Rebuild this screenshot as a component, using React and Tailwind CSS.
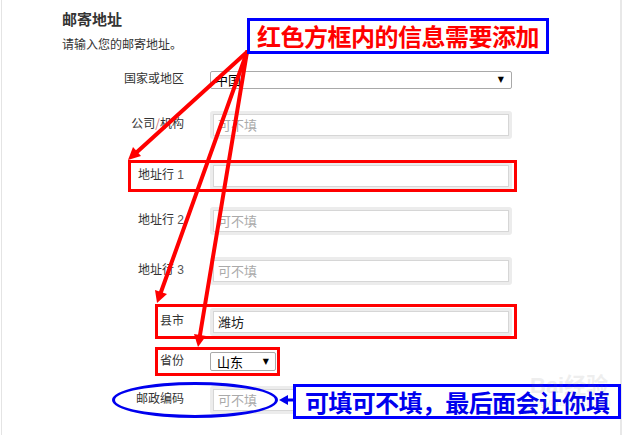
import React from 'react';

const cjk = { fontFamily: '"Noto Sans CJK SC", "Liberation Sans", sans-serif' };

// 标签 + 输入框的一行
const Row = ({ label, className, children }) => (
  <div className={`flex items-center ${className}`}>
    <div className="w-[122px] text-right text-[12px] leading-[18px] text-[#333] -mt-[4px] whitespace-pre">{label}</div>
    <div className="ml-[26px]">{children}</div>
  </div>
);

const TextBox = ({ value, placeholder }) => (
  <div className="w-[302px] h-[28px] rounded-[3px] bg-[#ececec] p-[3px]">
    <div className="w-[296px] h-[22px] bg-white border border-[#d6d6d6] flex items-center pl-[4px] text-[13px]">
      {value ? <span className="text-[#222]">{value}</span> : <span className="text-[#aaa]">{placeholder}</span>}
    </div>
  </div>
);

const Num = ({ n }) => <span className="text-[#555]" style={{ fontFamily: '"Liberation Sans", sans-serif' }}> {n}</span>;

export default function App() {
  return (
    <div className="relative w-[625px] h-[435px] bg-white overflow-hidden" style={cjk}>
      <div className="absolute left-[1px] top-0 h-full w-[1px] bg-[#e4e4e4]" />
      <div className="absolute left-[620px] top-0 h-full w-[2px] bg-[#e8e8e8]" />

      <div className="pl-[62px] pt-[9px]">
        <h2 className="text-[15px] leading-[20px] font-bold text-[#333]">邮寄地址</h2>
        <p className="mt-[6px] text-[12px] leading-[18px] text-[#333]">请输入您的邮寄地址。</p>

        <Row label="国家或地区" className="mt-[18px] h-[18px]">
          <div className="w-[302px] h-[18px] border border-[#a9a9a9] rounded-[2px] flex items-center justify-between pl-[4px] pr-[7px] text-[13px] text-black">
            <span>中国</span>
            <span className="text-[8px]" style={{ fontFamily: '"DejaVu Sans", sans-serif' }}>▼</span>
          </div>
        </Row>
        <Row label={<>公司<span className="text-[#c77]">/</span>机构</>} className="mt-[22px] h-[28px]">
          <TextBox placeholder="可不填" />
        </Row>
        <Row label={<>地址行<Num n="1" /></>} className="mt-[23px] h-[28px]">
          <TextBox />
        </Row>
        <Row label={<>地址行<Num n="2" /></>} className="mt-[17px] h-[28px]">
          <TextBox placeholder="可不填" />
        </Row>
        <Row label={<>地址行<Num n="3" /></>} className="mt-[22px] h-[28px]">
          <TextBox placeholder="可不填" />
        </Row>
        <Row label="县市" className="mt-[23px] h-[28px]">
          <TextBox value="潍坊" />
        </Row>
        <Row label="省份" className="mt-[16px] h-[19px]">
          <div className="w-[66px] h-[19px] border border-[#a9a9a9] rounded-[2px] flex items-center justify-between pl-[6px] pr-[6px] text-[13px] text-black">
            <span>山东</span>
            <span className="text-[8px]" style={{ fontFamily: '"DejaVu Sans", sans-serif' }}>▼</span>
          </div>
        </Row>
        <Row label="邮政编码" className="mt-[15px] h-[28px]">
          <TextBox placeholder="可不填" />
        </Row>
      </div>

      {/* 标注 */}
      <div className="absolute left-[128px] top-[160px] w-[389px] h-[32px] border-[3px] border-[#ff0000]" />
      <div className="absolute left-[155px] top-[304px] w-[362px] h-[35px] border-[3px] border-[#ff0000]" />
      <div className="absolute left-[155px] top-[347px] w-[125px] h-[29px] border-[3px] border-[#ff0000]" />
      <div className="absolute left-[112px] top-[382px] w-[166px] h-[36px] rounded-[50%] border-[3px] border-[#0000ee]" />

      <svg className="absolute left-0 top-0" width="625" height="435">
        <g stroke="#ff0000" strokeWidth="4" strokeLinecap="round">
          <line x1="247" y1="52" x2="137" y2="152" />
          <line x1="247" y1="52" x2="161" y2="292" />
          <line x1="247" y1="52" x2="200" y2="335" />
        </g>
        <g fill="#ff0000">
          <polygon points="128,160 141,156 133,147" />
          <polygon points="157,303 167,294 155,290" />
          <polygon points="198,347 206,336 194,334" />
        </g>
        <line x1="293" y1="400" x2="286" y2="400" stroke="#0000ee" strokeWidth="3" />
        <polygon points="279,400 288,395 288,405" fill="#0000ee" />
      </svg>

      <div className="absolute left-[247px] top-[18px] w-[302px] h-[36px] border-[3px] border-[#0000ff] bg-white flex items-center justify-center">
        <span className="text-[24px] leading-none font-bold text-[#ff0000] tracking-[-0.5px]">红色方框内的信息需要添加</span>
      </div>

      <div className="absolute left-[293px] top-[384px] w-[328px] h-[35px] border-[3px] border-[#0000ff] bg-white flex items-center justify-center">
        <span className="text-[24px] leading-none font-bold text-[#0000ee] tracking-[-0.6px]">可填可不填，最后面会让你填</span>
      </div>

      {/* 水印 */}
      <div className="absolute left-[530px] top-[372px] flex flex-col items-start opacity-[0.12] text-[#777] pointer-events-none" style={{ fontFamily: '"Liberation Sans", sans-serif' }}>
        <span className="text-[22px] leading-[22px] font-bold">Bai<span style={cjk}>经验</span></span>
        <span className="text-[10px] leading-[12px]">jingyan.baidu.com</span>
      </div>
    </div>
  );
}
